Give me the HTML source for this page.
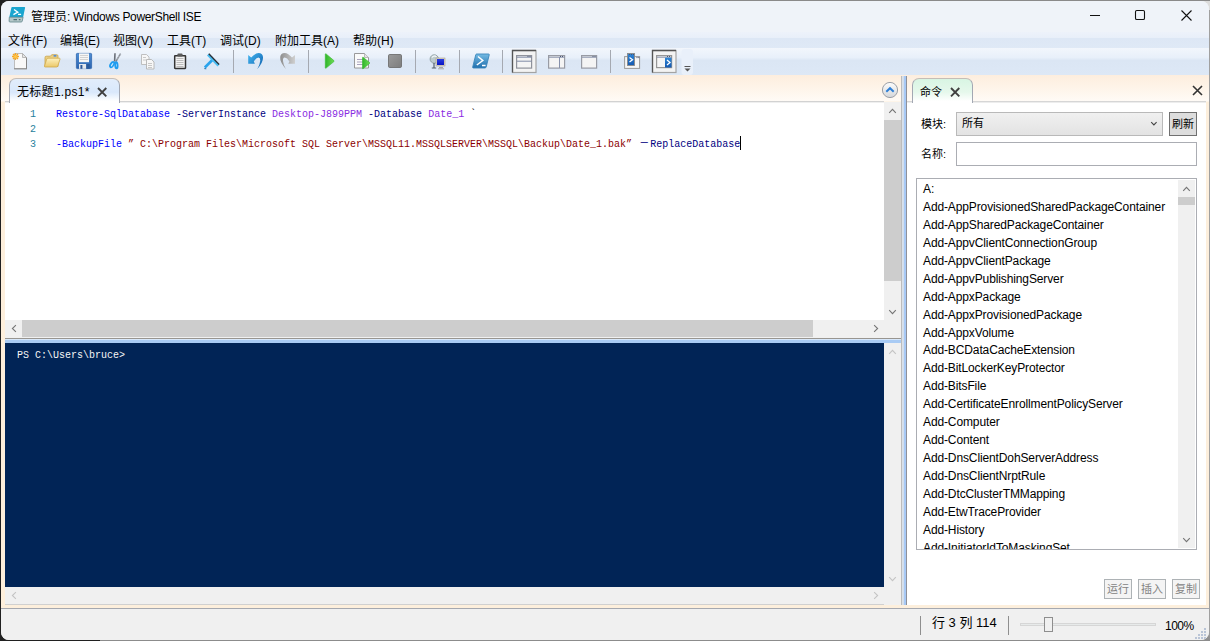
<!DOCTYPE html>
<html lang="zh-CN">
<head>
<meta charset="utf-8">
<title>管理员: Windows PowerShell ISE</title>
<style>
*{box-sizing:border-box;margin:0;padding:0}
html,body{width:1210px;height:641px;overflow:hidden}
body{position:relative;background:#202020;font-family:"Liberation Sans","Noto Sans CJK SC",sans-serif;font-size:12px;color:#000}
.abs,.abs>*{position:absolute}
#bgtop{left:100px;top:0;width:1110px;height:12px;background:linear-gradient(#8a8a8a 0,#8a8a8a 1px,#dcdcdc 1px)}
#bgbot{left:100px;top:638px;width:1110px;height:3px;background:#8c8c8c}
#bgr{left:1200px;top:10px;width:10px;height:631px;background:linear-gradient(#a0a0a0 0,#a0a0a0 620px,#8c8c8c 631px)}
#win{left:1px;top:1px;width:1208px;height:639px;background:#f0f0f0;border-radius:8px;overflow:hidden}
#o{left:-1px;top:-1px;width:1210px;height:641px}
/* title bar */
#title{left:0;top:0;width:1210px;height:32px;background:#eff3f9}
#title .txt{left:31px;top:8px;font-size:12px;line-height:18px;white-space:nowrap;letter-spacing:-.33px}
#title .txt b{font-weight:normal;letter-spacing:0}
/* menu */
#menu{left:0;top:32px;width:1210px;height:16px;background:linear-gradient(#edf2fa 0,#e8eff9 6px,#dde7f5 6.5px,#dfe9f6 100%)}
#menu span{top:.5px;line-height:17px;font-size:12px;white-space:nowrap}
/* toolbar */
#tool{left:0;top:48px;width:1210px;height:27px;background:linear-gradient(#f2f6fc 0,#e8f0fa 9.500px,#dbe6f4 12.500px,#dde8f6 100%)}
/* workspace */
#work{left:0;top:75px;width:1210px;height:534px;background:linear-gradient(#fdeede 0,#fef4e8 12px,#fffbf6 26px,#fdefdc 27px,#fdefdc 100%)}
.tab{border:1px solid #a3a8b3;border-top-color:#c4bdb8;border-bottom:none;border-radius:7px 7px 0 0}
#tab1{left:9px;top:78px;width:111px;height:25px;background:linear-gradient(#e2edfb,#d9e8fb 55%,#fff 92%);z-index:3}
#tab1 .t{left:7px;top:4.500px;line-height:16px;white-space:nowrap;letter-spacing:.3px}
#edit{left:5px;top:101px;width:879px;height:219px;background:#fff;border-top:1px solid #d2d2d2;box-shadow:inset 0 1px #efefef}
.code{font-family:"Liberation Mono","Noto Sans CJK SC",monospace;font-size:10px;line-height:13.393px;white-space:pre;transform:scaleY(1.12);transform-origin:0 0;letter-spacing:0}
.fw{display:inline-block;width:12px;text-align:center}
.sb{background:#f0f0f0}
.thumb{background:#cdcdcd}
.lbl{white-space:nowrap;line-height:16px}
.box{border:1px solid #abadb3;background:#fff}
#list div{position:static;height:17.95px;line-height:17.95px;white-space:nowrap;padding-left:6px;letter-spacing:-.12px}
.btn{border:1px solid #adb2b5;background:#f4f4f4;color:#838383;text-align:center;line-height:18px;font-size:11px;height:20px;top:579px;width:28px}
/* status */
#status{left:0;top:608px;width:1210px;height:33px;background:#f0f0f0;border-top:1px solid #a5a8b0}
</style>
</head>
<body class="abs">
<div id="bgtop"></div><div id="bgbot"></div><div id="bgr"></div>
<div id="win" class="abs"><div id="o" class="abs">
  <div id="title" class="abs">
    <svg style="left:8px;top:5px" width="19" height="19" viewBox="8 5 19 19">
      <path d="M12.200 6.900h12.200q.9 0 .7.900l-2 9.400h-13.800l2.100-9.600q.2-.7.800-.7z" fill="#1ba5cf"/>
      <path d="M9.300 17.200h13.800l-.9 4q-.2.800-1 .8h-11.200q-.9 0-.9-.9z" fill="#b5c8ca" stroke="#5e8489" stroke-width=".8"/>
      <path d="M14 9.500l3.800 2.600-4.400 2.500" fill="none" stroke="#fff" stroke-width="1.300"/>
      <path d="M18 14.400h3.100" stroke="#fff" stroke-width="1.200"/>
      <path d="M13.500 19.600h3.500M18.800 19.600h1.700" stroke="#4f6f73" stroke-width="1.100"/>
    </svg>
    <div class="txt"><b>管理员</b>: Windows PowerShell ISE</div>
    <svg style="left:1085px;top:6px" width="120" height="20" viewBox="1085 6 120 20" fill="none" stroke="#111" stroke-width="1.100">
      <path d="M1090 15.500h10"/>
      <rect x="1135.500" y="10.500" width="9" height="9" rx="1.300"/>
      <path d="M1181.500 10.500l10 10M1191.500 10.500l-10 10"/>
    </svg>
  </div>
  <div id="menu" class="abs">
    <span style="left:8px">文件(F)</span>
    <span style="left:60px">编辑(E)</span>
    <span style="left:113px">视图(V)</span>
    <span style="left:167px">工具(T)</span>
    <span style="left:220px">调试(D)</span>
    <span style="left:275px">附加工具(A)</span>
    <span style="left:353px">帮助(H)</span>
  </div>
  <div id="tool"></div>
  <svg id="tbsvg" style="left:0;top:48px" width="700" height="27" viewBox="0 0 700 27">
      <defs>
        <linearGradient id="gFold" x1="0" y1="0" x2="0" y2="1"><stop offset="0" stop-color="#fdf1c0"/><stop offset="1" stop-color="#ebc868"/></linearGradient>
        <linearGradient id="gSave" x1="0" y1="0" x2="0" y2="1"><stop offset="0" stop-color="#4f8fd6"/><stop offset="1" stop-color="#2a62ad"/></linearGradient>
        <linearGradient id="gUndo" x1="0" y1="0" x2="1" y2="1"><stop offset="0" stop-color="#45b8f2"/><stop offset="1" stop-color="#0b5cab"/></linearGradient>
        <linearGradient id="gRedo" x1="0" y1="0" x2="1" y2="0"><stop offset="0" stop-color="#8f8f8f"/><stop offset="1" stop-color="#cfcfcf"/></linearGradient>
        <linearGradient id="gRun" x1="0" y1="0" x2="1" y2="0"><stop offset="0" stop-color="#2fb52a"/><stop offset="1" stop-color="#6fdc55"/></linearGradient>
        <linearGradient id="gStop" x1="0" y1="0" x2="1" y2="1"><stop offset="0" stop-color="#9b9b9b"/><stop offset="1" stop-color="#7d7d7d"/></linearGradient>
        <linearGradient id="gPS" x1="0" y1="0" x2="0" y2="1"><stop offset="0" stop-color="#74bbe4"/><stop offset="1" stop-color="#1f6ead"/></linearGradient>
        <linearGradient id="gScr" x1="0" y1="0" x2="0" y2="1"><stop offset="0" stop-color="#2a3fe0"/><stop offset="1" stop-color="#0814c4"/></linearGradient>
        <linearGradient id="gBl" x1="0" y1="0" x2="0" y2="1"><stop offset="0" stop-color="#2f86d6"/><stop offset="1" stop-color="#1559b0"/></linearGradient>
      </defs>
      <rect x="681.500" y="1" width="11.500" height="26" rx="3" fill="#e9f0fa"/>
      <!-- new -->
      <path d="M14.500 5.500h8l4 4v11.300h-12z" fill="#f8f8f8" stroke="#bdbdbd" stroke-width="1"/>
      <path d="M14 20.800h13M26.500 9.500v11.300" stroke="#858585" stroke-width="1" fill="none"/>
      <path d="M22.500 5.500v4h4z" fill="#e6e6e6" stroke="#a8a8a8" stroke-width=".8"/>
      <path d="M15.500 5v7M12 8.500h7M13 6l5 5M18 6l-5 5" stroke="#f7a823" stroke-width="1.300"/>
      <circle cx="15.500" cy="8.500" r="1.600" fill="#ffc64a"/>
      <!-- open -->
      <path d="M45 9.500q0-1.300 1.300-1.300h4.200l1.200-1.500h5q1.300 0 1.300 1.300v10.500h-13z" fill="#ecd083" stroke="#c9a34a" stroke-width=".8"/>
      <rect x="53.600" y="6.900" width="2.800" height="1.800" fill="#5b8fd0"/>
      <path d="M48 10.200h11.300q1 0 .7 1l-2.200 6.800q-.3 1-1.300 1h-11.300q-1 0-.7-1l2.200-6.800q.3-1 1.300-1z" fill="url(#gFold)" stroke="#cfa94e" stroke-width=".8"/>
      <!-- save -->
      <rect x="76.400" y="5.400" width="15.200" height="15.200" rx=".8" fill="url(#gSave)" stroke="#2f66ad" stroke-width=".8"/>
      <rect x="79" y="5.400" width="10" height="8.800" fill="#f6f6f6"/>
      <path d="M80 7.500h8M80 9.500h8M80 11.500h8" stroke="#c9c9c9" stroke-width=".8"/>
      <rect x="79" y="16" width="7.300" height="4.800" fill="#e3e7ec"/>
      <rect x="80.400" y="17" width="2" height="3.800" fill="#2c5798"/>
      <rect x="86.300" y="16" width="3.400" height="4.800" fill="#2b5a9c"/>
      <!-- cut -->
      <path d="M115 5.200L114.600 13.500" stroke="#6a6f78" stroke-width="1.600" fill="none"/>
      <path d="M120.600 5.600L115.800 13.600" stroke="#7d838c" stroke-width="1.500" fill="none"/>
      <path d="M120.300 6.300L117 11.800" stroke="#f2f4f6" stroke-width=".7" stroke-dasharray="1 1" fill="none"/>
      <ellipse cx="112.100" cy="16.600" rx="1.500" ry="3" fill="#d6ebfa" stroke="#1e9cf0" stroke-width="1.800" transform="rotate(32 112.100 16.600)"/>
      <ellipse cx="116.400" cy="17.300" rx="1.200" ry="3.100" fill="#d6ebfa" stroke="#1e9cf0" stroke-width="1.800" transform="rotate(-4 116.400 17.300)"/>
      <!-- copy -->
      <path d="M141.500 6.500h5l2.500 2.500v7.500h-7.500z" fill="#f7f7f7" stroke="#b9b9b9" stroke-width=".9"/>
      <path d="M146.500 11.500h5l2.500 2.500v7h-7.500z" fill="#f7f7f7" stroke="#b3b3b3" stroke-width=".9"/>
      <path d="M143 9.500h3M143 12h3M148 15.500h4M148 17.500h4M148 19.500h4" stroke="#c2c2c2" stroke-width=".9"/>
      <!-- paste -->
      <rect x="174.700" y="7.700" width="10.800" height="12.800" rx=".4" fill="#f2f2f2" stroke="#343434" stroke-width="1.500"/>
      <rect x="177.500" y="5.500" width="5" height="3" rx=".8" fill="#5a5a5a"/>
      <path d="M176.500 10.500h7M176.500 12.500h7M176.500 14.500h7M176.500 16.500h7M176.500 18.500h7" stroke="#b5b5b5" stroke-width=".9"/>
      <!-- clear -->
      <path d="M204.800 19.500l8-8" stroke="#29a3ec" stroke-width="2.600"/>
      <path d="M204.300 20.600l2 .2" stroke="#1d6fae" stroke-width="1"/>
      <path d="M208 6.500l10.500 11" stroke="#49bdf3" stroke-width="2.800"/>
      <path d="M208.800 5.700l10.300 10.800" stroke="#2b2f36" stroke-width="1.300"/>
      <rect x="233" y="2" width="1" height="23" fill="#a5a9b1"/>
      <!-- undo -->
      <path d="M248.200 6.900L248.200 15.700L254.900 15.700L253.800 13.500Q256 9.800 258.500 9.600Q260.500 9.800 260.200 13Q259.800 17 257.200 21.200Q263.500 14 263 9Q262.500 5 258.500 5Q255 5.200 251.200 9.600Z" fill="url(#gUndo)"/>
      <!-- redo -->
      <path d="M295 6.900L295 15.700L288.3 15.700L289.4 13.500Q287.2 9.800 284.7 9.600Q282.7 9.800 283 13Q283.4 17 286 21.200Q279.7 14 280.2 9Q280.7 5 284.7 5Q288.2 5.200 292 9.600Z" fill="url(#gRedo)"/>
      <rect x="308" y="2" width="1" height="23" fill="#a5a9b1"/>
      <!-- run -->
      <path d="M325.300 6.300v13.400q0 .8.800.4l7.800-6.500q.5-.5 0-1l-7.800-6.700q-.8-.4-.8.400z" fill="url(#gRun)" stroke="#35b82e" stroke-width=".6"/>
      <!-- run selection -->
      <path d="M354.500 5.500h10l4 4v10.500h-14z" fill="#fafafa" stroke="#8f8f8f" stroke-width=".9"/>
      <path d="M364.500 5.500v4h4" fill="#e4e4e4" stroke="#a5a5a5" stroke-width=".7"/>
      <path d="M357 11.500h6M357 14h6M357 16.500h6" stroke="#a9a3bd" stroke-width="1"/>
      <path d="M362.500 9.700v10.600q0 .8.700.4l6.300-5.200q.5-.5 0-1l-6.300-5.200q-.7-.4-.7.400z" fill="url(#gRun)" stroke="#35b82e" stroke-width=".6"/>
      <!-- stop -->
      <rect x="388.500" y="6.500" width="13" height="13" rx="1.300" fill="url(#gStop)" stroke="#6f6f6f" stroke-width=".9"/>
      <rect x="415" y="2" width="1" height="23" fill="#a5a9b1"/>
      <!-- remote -->
      <circle cx="434.300" cy="11" r="4.200" fill="#bccacd" stroke="#8a9a9e" stroke-width=".9"/>
      <path d="M431.800 9.500q2.200-2.500 4.800-.8" stroke="#eef3f4" stroke-width="1.300" fill="none"/>
      <path d="M434 15v4.500M431.800 20h4.400" stroke="#55606a" stroke-width="1.200"/>
      <rect x="436" y="10" width="9" height="8" fill="#d8d2c4" stroke="#a89f8e" stroke-width=".6"/>
      <rect x="437" y="11" width="7" height="6" fill="url(#gScr)"/>
      <path d="M439 19.500h4M438 20.800h6" stroke="#a7a7a7" stroke-width="1"/>
      <rect x="459" y="2" width="1" height="23" fill="#a5a9b1"/>
      <!-- powershell -->
      <path d="M476.500 6h12q1 0 .7 1l-3 12q-.3 1-1.300 1h-11.500q-1 0-.7-1l3-12q.3-1 .8-1z" fill="url(#gPS)" stroke="#3a86bb" stroke-width=".9"/>
      <path d="M478 8.500l4.800 4-6 4.500" fill="none" stroke="#fff" stroke-width="1.500"/>
      <path d="M482 17.500h3.600" stroke="#fff" stroke-width="1.400"/>
      <rect x="502" y="2" width="1" height="23" fill="#a5a9b1"/>
      <!-- layout 1 selected -->
      <rect x="512.500" y="2.500" width="23.500" height="22" fill="#f3f3f3" stroke="#a3a3a3" stroke-width="1.200"/><path d="M512.500 24.500v-22h23.500" fill="none" stroke="#555" stroke-width="1.300"/>
      <rect x="516.600" y="7.600" width="15" height="12.500" fill="#f4f4f4" stroke="#8f929b" stroke-width="1.200"/>
      <path d="M517 9.200h14.500M517 13.200h14.500" stroke="#7f8aa6" stroke-width="1"/>
      <!-- layout 2 -->
      <rect x="548.600" y="7.600" width="16" height="12.500" fill="#f4f4f4" stroke="#989ba4" stroke-width="1.200"/>
      <path d="M549 9.200h15.500M559.500 9v11" stroke="#8690aa" stroke-width="1"/>
      <!-- layout 3 -->
      <rect x="581.600" y="7.600" width="15" height="12.500" fill="#f4f4f4" stroke="#989ba4" stroke-width="1.200"/>
      <path d="M582 9.200h14.500" stroke="#8690aa" stroke-width="1"/>
      <rect x="610" y="2" width="1" height="23" fill="#a5a9b1"/>
      <!-- show script pane top -->
      <rect x="624.600" y="8.600" width="15" height="11.800" fill="#f6f6f6" stroke="#9a9a9a" stroke-width="1"/>
      <rect x="627.500" y="5.500" width="7" height="12" fill="url(#gBl)" stroke="#8b8b8b" stroke-width=".9"/>
      <path d="M629.500 9.500l3 2.300-3 2.300" fill="none" stroke="#fff" stroke-width="1.300"/>
      <!-- show script pane right selected -->
      <rect x="652.500" y="2.500" width="23.500" height="22" fill="#f3f3f3" stroke="#a3a3a3" stroke-width="1.200"/><path d="M652.500 24.500v-22h23.500" fill="none" stroke="#555" stroke-width="1.300"/>
      <rect x="656.600" y="7.600" width="15" height="12" fill="#f6f6f6" stroke="#969696" stroke-width="1.200"/>
      <path d="M657 9.200h14.500" stroke="#8690aa" stroke-width="1"/>
      <rect x="665" y="9.700" width="6.500" height="9.800" fill="url(#gBl)"/>
      <path d="M667 12l3 2.500-3 2.500" fill="none" stroke="#fff" stroke-width="1.300"/>
      <path d="M527.500 8.500h1M529.500 8.500h1M560 8.500h1M562 8.500h1M592.500 8.500h1M594.500 8.500h1M667 8.500h1M669 8.500h1M631 6.500h1M629 6.500h1M633 6.500h1M636.500 9.600h1M638.300 9.600h1" stroke="#4a5675" stroke-width="1"/>
      <!-- overflow -->
      <path d="M684.500 18.500h6" stroke="#555" stroke-width="1"/>
      <path d="M684.500 20.500h6l-3 3z" fill="#555"/>
    </svg>
  <div id="work"></div>
  <div id="tab1" class="tab abs"><div class="t">无标题1.ps1*</div>
    <svg style="left:87px;top:8px" width="11" height="11" viewBox="0 0 11 11"><path d="M1 1l8.300 8.300M9.300 1l-8.300 8.300" stroke="#404040" stroke-width="1.900" fill="none"/></svg>
  </div>
  <div id="edit" class="abs">
    <div class="code" style="left:25px;top:5px;color:#1f7f9c">1
2
3</div>
    <div class="code" style="left:51px;top:5px"><span style="color:#0000ff">Restore-SqlDatabase</span> <span style="color:#000080">-ServerInstance</span> <span style="color:#8a2be2">Desktop-J899PPM</span> <span style="color:#000080">-Database</span> <span style="color:#8a2be2">Date_1</span> <span style="color:#000">`</span>

<span style="color:#0000ff">-BackupFile</span> <span style="color:#8b0000">” C:\Program Files\Microsoft SQL Server\MSSQL11.MSSQLSERVER\MSSQL\Backup\Date_1.bak”</span> <span style="color:#000080"><span class="fw">－</span>ReplaceDatabase</span></div>
    <div style="left:735px;top:34px;width:1px;height:14px;background:#000"></div>
  </div>
  <!-- editor v scrollbar -->
  <div class="sb abs" style="left:884px;top:102px;width:17px;height:218px">
    <div class="thumb" style="left:0;top:18px;width:17px;height:161px"></div>
    <svg style="left:4px;top:6px" width="9" height="6" viewBox="0 0 9 6"><path d="M1.200 4.900l3.300-3.500L7.800 4.900" fill="none" stroke="#757575" stroke-width="1.100"/></svg>
    <svg style="left:4px;top:207px" width="9" height="6" viewBox="0 0 9 6"><path d="M1.200 1.100l3.300 3.500L7.800 1.100" fill="none" stroke="#757575" stroke-width="1.100"/></svg>
  </div>
  <!-- editor h scrollbar -->
  <div class="sb abs" style="left:5px;top:320px;width:896px;height:19px;border-bottom:1px solid #989590">
    <div class="thumb" style="left:17px;top:0;width:791px;height:17px"></div>
    <svg style="left:6px;top:4px" width="6" height="9" viewBox="0 0 6 9"><path d="M4.900 1.200L1.400 4.500 4.900 7.800" fill="none" stroke="#757575" stroke-width="1.100"/></svg>
    <svg style="left:868px;top:4px" width="6" height="9" viewBox="0 0 6 9"><path d="M1.100 1.200l3.500 3.300L1.100 7.800" fill="none" stroke="#757575" stroke-width="1.100"/></svg>
  </div>
  <div style="left:5px;top:339px;width:896px;height:4px;background:linear-gradient(#dcebfb 0,#d2e4fa 1px,#a9cbf4 1.500px,#a9cbf4 3.500px,#bcd6f6 100%)"></div>
  <!-- console -->
  <div id="con" class="abs" style="left:5px;top:343px;width:879px;height:244px;background:#012456"><div class="code" style="left:12px;top:5px;color:#f5f5f5">PS C:\Users\bruce&gt; </div></div>
  <div class="sb abs" style="left:884px;top:343px;width:17px;height:262px">
    <svg style="left:4px;top:6px" width="9" height="6" viewBox="0 0 9 6"><path d="M1.200 4.900l3.300-3.500L7.800 4.900" fill="none" stroke="#c4c4c4" stroke-width="1.100"/></svg>
    <svg style="left:4px;top:233px" width="9" height="6" viewBox="0 0 9 6"><path d="M1.200 1.100l3.300 3.500L7.800 1.100" fill="none" stroke="#c4c4c4" stroke-width="1.100"/></svg>
  </div>
  <div class="sb abs" style="left:5px;top:587px;width:879px;height:18px;border-bottom:1px solid #d0d0d0">
    <svg style="left:6px;top:4px" width="6" height="9" viewBox="0 0 6 9"><path d="M4.900 1.200L1.400 4.500 4.900 7.800" fill="none" stroke="#c4c4c4" stroke-width="1.100"/></svg>
    <svg style="left:868px;top:4px" width="6" height="9" viewBox="0 0 6 9"><path d="M1.100 1.200l3.500 3.300L1.100 7.800" fill="none" stroke="#c4c4c4" stroke-width="1.100"/></svg>
  </div>
  <!-- collapse button -->
  <svg style="left:881px;top:81px" width="18" height="18" viewBox="0 0 18 18">
    <defs><linearGradient id="gC" x1="0" y1="0" x2="0" y2="1"><stop offset="0" stop-color="#fdfdfd"/><stop offset="1" stop-color="#d4d6d9"/></linearGradient></defs>
    <circle cx="9" cy="9" r="7.600" fill="url(#gC)" stroke="#9b9fa6" stroke-width="1"/>
    <path d="M5.300 10.800L9 7.200l3.700 3.600" fill="none" stroke="#2f7fd6" stroke-width="2"/>
  </svg>
  <!-- vertical splitter -->
  <div style="left:901px;top:76px;width:6px;height:529px;background:linear-gradient(90deg,#bcbcbc 0,#bcbcbc 1px,#dbe2ea 1px,#d3deeb 2.500px,#a9caf5 2.500px,#a6c8f5 5px,#8d9099 5px)"></div>
  <!-- command panel -->
  <div id="panel" style="left:907px;top:101px;width:299px;height:504px;background:#fff;border-top:1px solid #d6d6d6;box-shadow:inset 0 1px #ededed"></div>
  <div id="tab2" class="tab abs" style="left:912px;top:78px;width:61px;height:25px;background:linear-gradient(#d8f5e3,#e6f8ec 55%,#fff 92%);z-index:3"><div class="lbl" style="left:7px;top:5px;font-size:11px">命令</div>
    <svg style="left:37px;top:8px" width="11" height="11" viewBox="0 0 11 11"><path d="M1 1l8.300 8.300M9.300 1l-8.300 8.300" stroke="#404040" stroke-width="1.900" fill="none"/></svg>
  </div>
  <svg style="left:1192px;top:85px" width="11" height="11" viewBox="0 0 11 11"><path d="M1 1l9 9M10 1l-9 9" stroke="#333" stroke-width="1.600" fill="none"/></svg>
  <div class="lbl" style="left:921px;top:116px;font-size:11px">模块:</div>
  <div class="box abs" style="left:956px;top:112px;width:207px;height:24px;background:linear-gradient(#f0f0f0,#e3e3e3);border-color:#b9b9b9"><div class="lbl" style="left:5px;top:2px;font-size:11px">所有</div>
    <svg style="left:193px;top:8px" width="8" height="6" viewBox="0 0 8 6"><path d="M1.200 1.200l2.700 2.700L6.600 1.200" fill="none" stroke="#444" stroke-width="1.100"/></svg>
  </div>
  <div class="box abs" style="left:1169px;top:112px;width:28px;height:24px;background:#dddddd;border-color:#707070"><div class="lbl" style="left:2px;top:3px;font-size:11px">刷新</div></div>
  <div class="lbl" style="left:921px;top:146px;font-size:11px">名称:</div>
  <div class="box" style="left:956px;top:142px;width:241px;height:24px"></div>
  <div class="box abs" style="left:916px;top:178px;width:281px;height:372px;overflow:hidden">
    <div id="list" style="left:0;top:2px;width:260px">
      <div>A:</div>
      <div>Add-AppProvisionedSharedPackageContainer</div>
      <div>Add-AppSharedPackageContainer</div>
      <div>Add-AppvClientConnectionGroup</div>
      <div>Add-AppvClientPackage</div>
      <div>Add-AppvPublishingServer</div>
      <div>Add-AppxPackage</div>
      <div>Add-AppxProvisionedPackage</div>
      <div>Add-AppxVolume</div>
      <div>Add-BCDataCacheExtension</div>
      <div>Add-BitLockerKeyProtector</div>
      <div>Add-BitsFile</div>
      <div>Add-CertificateEnrollmentPolicyServer</div>
      <div>Add-Computer</div>
      <div>Add-Content</div>
      <div>Add-DnsClientDohServerAddress</div>
      <div>Add-DnsClientNrptRule</div>
      <div>Add-DtcClusterTMMapping</div>
      <div>Add-EtwTraceProvider</div>
      <div>Add-History</div>
      <div>Add-InitiatorIdToMaskingSet</div>
    </div>
    <div class="sb abs" style="left:261px;top:1px;width:17px;height:368px">
      <div class="thumb" style="left:0;top:17px;width:17px;height:8px"></div>
      <svg style="left:4px;top:6px" width="9" height="6" viewBox="0 0 9 6"><path d="M1.200 4.900l3.300-3.500L7.800 4.900" fill="none" stroke="#757575" stroke-width="1.100"/></svg>
      <svg style="left:4px;top:357px" width="9" height="6" viewBox="0 0 9 6"><path d="M1.200 1.100l3.300 3.500L7.800 1.100" fill="none" stroke="#757575" stroke-width="1.100"/></svg>
    </div>
  </div>
  <div class="btn" style="left:1104px">运行</div>
  <div class="btn" style="left:1138px">插入</div>
  <div class="btn" style="left:1172px">复制</div>
  <div id="status" class="abs">
    <div style="left:920px;top:7px;width:1px;height:19px;background:#8e8e8e"></div>
    <div class="lbl" style="left:932px;top:6px;font-size:13px">行 3 列 114</div>
    <div style="left:1008px;top:7px;width:1px;height:19px;background:#8e8e8e"></div>
    <div style="left:1020px;top:14px;width:136px;height:3px;border:1px solid #d6d6d6;background:#e7eaea"></div>
    <div style="left:1044px;top:8px;width:9px;height:15px;border:1px solid #8e8e8e;background:#f0f0f0"></div>
    <div class="lbl" style="left:1165px;top:9px;letter-spacing:-.5px">100%</div>
    <svg style="left:1194px;top:17px" width="14" height="14" viewBox="0 0 14 14" fill="#b9c4d6"><rect x="10" y="2" width="2" height="2"/><rect x="7" y="5" width="2" height="2"/><rect x="10" y="5" width="2" height="2"/><rect x="4" y="8" width="2" height="2"/><rect x="7" y="8" width="2" height="2"/><rect x="10" y="8" width="2" height="2"/><rect x="1" y="11" width="2" height="2"/><rect x="4" y="11" width="2" height="2"/><rect x="7" y="11" width="2" height="2"/><rect x="10" y="11" width="2" height="2"/></svg>
  </div>
</div></div>
</body>
</html>
